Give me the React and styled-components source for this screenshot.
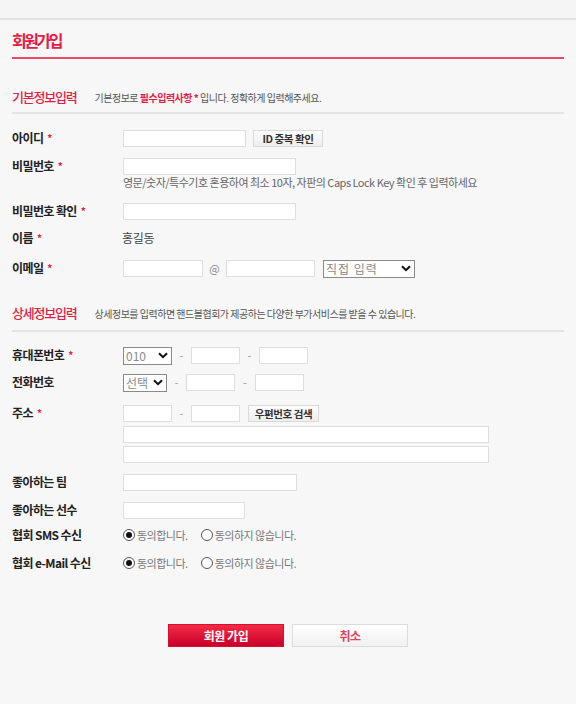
import React from 'react';
import styled, { createGlobalStyle } from 'styled-components';

const GlobalStyle = createGlobalStyle`
    html, body {
        margin: 0;
        padding: 0;
        background: #f7f7f7;
    }
    body {
        font-family: "Noto Sans CJK KR", "Noto Sans", "Liberation Sans", sans-serif;
        color: #222;
    }
`

const Page = styled.div`
    min-height: 704px;
    background: #f7f7f7;
`

const TopBar = styled.div`
    height: 18px;
    background: #f5f5f5;
    border-bottom: 2px solid #e3e3e3;
`

const Wrap = styled.div`
    padding: 0 12px;
`

const Title = styled.h1`
    margin: 10px 0 0;
    padding-bottom: 7px;
    font-size: 16px;
    line-height: 20px;
    font-weight: 700;
    letter-spacing: -2.5px;
    color: #e41b42;
    border-bottom: 2px solid #f04a62;
`

const SectionHead = styled.div`
    display: flex;
    align-items: center;
    margin-top: ${p => p.top}px;
    padding-bottom: ${p => p.pb || 6}px;
    height: 18px;
    border-bottom: 2px solid #e4e4e4;
`

const SectionTitle = styled.h2`
    margin: 0 18px 0 0;
    font-size: 13px;
    font-weight: 500;
    letter-spacing: -1.2px;
    color: #e41b42;
    line-height: 18px;
`

const Desc = styled.span`
    font-size: 10px;
    letter-spacing: -0.5px;
    color: #555;
    b {
        color: #e41b42;
        font-weight: 700;
    }
`

const Row = styled.div`
    display: grid;
    grid-template-columns: 111px 1fr;
    align-items: start;
    margin-top: ${p => p.top}px;
`

const Label = styled.div`
    font-size: 12px;
    font-weight: 700;
    line-height: 15px;
    letter-spacing: -0.6px;
    color: #222;
    white-space: nowrap;
`

const Req = styled.span`
    color: #e41b42;
    font-size: 10px;
    margin-left: 4px;
    vertical-align: 1px;
`

const Field = styled.div`
    display: flex;
    align-items: center;
    height: 17px;
    margin-top: ${p => p.top || 0}px;
`

const Input = styled.div`
    box-sizing: border-box;
    width: ${p => p.w}px;
    height: 17px;
    background: #fff;
    border: 1px solid #dedede;
`

const Dash = styled.span`
    width: ${p => p.w || 19}px;
    text-align: center;
    font-size: 11px;
    color: #999;
    line-height: 15px;
`

const At = styled.span`
    width: 23px;
    text-align: center;
    font-size: 11px;
    color: #888;
    line-height: 15px;
`

const SmallBtn = styled.div`
    box-sizing: border-box;
    width: ${p => p.w}px;
    height: 17px;
    margin-left: ${p => p.ml}px;
    display: flex;
    align-items: center;
    justify-content: center;
    background: linear-gradient(#fdfdfd, #ededed);
    border: 1px solid #dadada;
    font-size: 10.5px;
    font-weight: 700;
    letter-spacing: -0.4px;
    color: #333;
`

const SelectBox = styled.div`
    box-sizing: border-box;
    width: ${p => p.w}px;
    height: 18px;
    margin-left: ${p => p.ml || 0}px;
    display: flex;
    align-items: center;
    justify-content: space-between;
    padding: 0 3px 0 2px;
    background: #fff;
    border: 1px solid #8a8a8a;
    font-size: 12px;
    color: #8a8a8a;
    letter-spacing: ${p => p.ls || 0}px;
    svg {
        flex: none;
    }
`

const Hint = styled.div`
    font-size: 11px;
    line-height: 14px;
    letter-spacing: -0.5px;
    color: #666;
    white-space: nowrap;
`

const Value = styled.div`
    font-size: 12px;
    line-height: 15px;
    color: #444;
    letter-spacing: -0.3px;
    margin-left: -1px;
`

const RadioGroup = styled.div`
    display: flex;
    align-items: center;
    height: 15px;
    gap: 13px;
`

const RadioItem = styled.label`
    display: flex;
    align-items: center;
    font-size: 11px;
    letter-spacing: -0.5px;
    color: #777;
`

const Dot = styled.span`
    box-sizing: border-box;
    width: 12px;
    height: 12px;
    margin-right: 2px;
    border-radius: 50%;
    border: 1px solid #555;
    background: #fff;
    display: flex;
    align-items: center;
    justify-content: center;
    &::after {
        content: "";
        width: 6px;
        height: 6px;
        border-radius: 50%;
        background: ${p => (p.on ? '#111' : 'transparent')};
    }
`

const Buttons = styled.div`
    display: flex;
    justify-content: center;
    gap: 8px;
    margin-top: 54px;
`

const BigBtn = styled.div`
    box-sizing: border-box;
    width: 116px;
    height: 23px;
    display: flex;
    align-items: center;
    justify-content: center;
    font-size: 12px;
    font-weight: 700;
    letter-spacing: -0.5px;
    background: ${p => (p.primary ? 'linear-gradient(#f42a44, #c8002b)' : 'linear-gradient(#ffffff, #f1f1f1)')};
    border: 1px solid ${p => (p.primary ? '#d0112f' : '#dcdcdc')};
    color: ${p => (p.primary ? '#fff' : '#e2405c')};
`

const Chevron = () => (
    <svg width="10" height="7" viewBox="0 0 10 7">
        <path d="M1 1.2 L5 5.2 L9 1.2" fill="none" stroke="#111" strokeWidth="2" />
    </svg>
)

const Select = ({ w, ml, ls, children }) => (
    <SelectBox w={w} ml={ml} ls={ls}>
        <span>{children}</span>
        <Chevron />
    </SelectBox>
)

const Req1 = () => <Req>*</Req>

const Radios = () => (
    <RadioGroup>
        <RadioItem><Dot on />동의합니다.</RadioItem>
        <RadioItem><Dot />동의하지 않습니다.</RadioItem>
    </RadioGroup>
)

const App = () => {
    return (
        <Page>
            <GlobalStyle />
            <TopBar />
            <Wrap>
                <Title>회원가입</Title>

                <SectionHead top={29}>
                    <SectionTitle>기본정보입력</SectionTitle>
                    <Desc>기본정보로 <b>필수입력사항 *</b> 입니다. 정확하게 입력해주세요.</Desc>
                </SectionHead>

                <Row top={16}>
                    <Label>아이디<Req1 /></Label>
                    <Field>
                        <Input w={123} />
                        <SmallBtn w={70} ml={7}>ID 중복 확인</SmallBtn>
                    </Field>
                </Row>
                <Row top={11}>
                    <Label>비밀번호<Req1 /></Label>
                    <div>
                        <Field><Input w={173} /></Field>
                        <Hint>영문/숫자/특수기호 혼용하여 최소 10자, 자판의 Caps Lock Key 확인 후 입력하세요</Hint>
                    </div>
                </Row>
                <Row top={14}>
                    <Label>비밀번호 확인<Req1 /></Label>
                    <Field><Input w={173} /></Field>
                </Row>
                <Row top={10}>
                    <Label>이름<Req1 /></Label>
                    <Value>홍길동</Value>
                </Row>
                <Row top={15}>
                    <Label>이메일<Req1 /></Label>
                    <Field>
                        <Input w={80} />
                        <At>@</At>
                        <Input w={89} />
                        <Select w={92} ml={8} ls={1}>직접 입력</Select>
                    </Field>
                </Row>

                <SectionHead top={27} pb={8}>
                    <SectionTitle>상세정보입력</SectionTitle>
                    <Desc>상세정보를 입력하면 핸드볼협회가 제공하는 다양한 부가서비스를 받을 수 있습니다.</Desc>
                </SectionHead>

                <Row top={15}>
                    <Label>휴대폰번호<Req1 /></Label>
                    <Field>
                        <Select w={49}>010</Select>
                        <Dash>-</Dash>
                        <Input w={49} />
                        <Dash>-</Dash>
                        <Input w={49} />
                    </Field>
                </Row>
                <Row top={10}>
                    <Label>전화번호</Label>
                    <Field>
                        <Select w={44}>선택</Select>
                        <Dash>-</Dash>
                        <Input w={49} />
                        <Dash w={20}>-</Dash>
                        <Input w={49} />
                    </Field>
                </Row>
                <Row top={14}>
                    <Label>주소<Req1 /></Label>
                    <div>
                        <Field>
                            <Input w={49} />
                            <Dash>-</Dash>
                            <Input w={49} />
                            <SmallBtn w={71} ml={8}>우편번호 검색</SmallBtn>
                        </Field>
                        <Field top={4}><Input w={366} /></Field>
                        <Field top={3}><Input w={366} /></Field>
                    </div>
                </Row>
                <Row top={11}>
                    <Label>좋아하는 팀</Label>
                    <Field><Input w={174} /></Field>
                </Row>
                <Row top={11}>
                    <Label>좋아하는 선수</Label>
                    <Field><Input w={122} /></Field>
                </Row>
                <Row top={8}>
                    <Label>협회 SMS 수신</Label>
                    <Radios />
                </Row>
                <Row top={13}>
                    <Label>협회 e-Mail 수신</Label>
                    <Radios />
                </Row>

                <Buttons>
                    <BigBtn primary>회원 가입</BigBtn>
                    <BigBtn>취소</BigBtn>
                </Buttons>
            </Wrap>
        </Page>
    );
}

export default App;
